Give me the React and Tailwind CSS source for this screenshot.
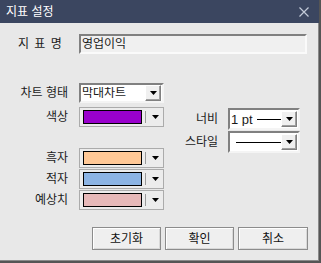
import React from "react";

const Arrow = () => (
  <svg width="7" height="4" viewBox="0 0 7 4" className="block">
    <path d="M0 0h7L3.5 4z" fill="#000" />
  </svg>
);

const Close = () => (
  <svg width="10" height="10" viewBox="0 0 10 10" className="block">
    <path d="M0.5 0.5L9.5 9.5M9.5 0.5L0.5 9.5" stroke="#c3cad8" strokeWidth="1.2" />
  </svg>
);

const ArrowBtn = () => (
  <div className="w-[16px] h-[16px] shrink-0 flex items-center justify-center bg-[#f0f0f0] border border-t-white border-l-white border-b-[#808080] border-r-[#808080] shadow-[inset_-1px_-1px_0_#a0a0a0]">
    <Arrow />
  </div>
);

const Combo = ({ w, h, children }) => (
  <div
    className={`${w} ${h} flex items-center bg-white border-2 border-t-[#808080] border-l-[#808080] border-b-[#f4f4f4] border-r-[#f4f4f4] pr-[1px]`}
  >
    <div className="flex-1 min-w-0 flex items-center pl-[1px] overflow-hidden whitespace-nowrap">{children}</div>
    <ArrowBtn />
  </div>
);

const ColorSelect = ({ color }) => (
  <div className="w-[85px] h-[20px] flex items-center border border-[#ababab] bg-[#ececec] pl-[3px]">
    <div className="w-[59px] h-[14px] border border-black" style={{ background: color }} />
    <div className="ml-[3px] w-px h-[12px] bg-[#9a9a9a]" />
    <div className="ml-[6px]">
      <Arrow />
    </div>
  </div>
);

const Btn = ({ children, w }) => (
  <div
    className={`${w} h-[23px] flex items-center justify-center bg-[#efefef] border border-[#8c8c8c] shadow-[inset_1px_1px_0_#ffffff,inset_-1px_-1px_0_#d8d8d8] text-[12px] text-[#111]`}
  >
    {children}
  </div>
);

export default function App() {
  return (
    <div
      className="w-[321px] h-[263px] flex flex-col bg-[#e8e8e8] border-r-2 border-b-2 border-r-[#555] border-b-[#555] shadow-[inset_-1px_-1px_0_#8a8a8a] overflow-hidden text-[#1a1a1a]"
      style={{ fontFamily: '"Liberation Sans","Noto Sans CJK KR",sans-serif' }}
    >
      <div className="h-[23px] shrink-0 bg-[#3b4660] flex items-center justify-between pl-[6px] pr-[10px]">
        <span className="text-[12px] text-white leading-none">지표 설정</span>
        <Close />
      </div>

      <div className="flex-1 flex flex-col pt-[11px] text-[12px] leading-none">
        <div className="flex items-center">
          <div className="w-[79px] pl-[18px] tracking-[1px]">지 표 명</div>
          <div className="w-[228px] h-[20px] flex items-center bg-[#f0f0f0] border-2 border-t-[#808080] border-l-[#808080] border-b-[#fafafa] border-r-[#fafafa] pl-[1px]">
            영업이익
          </div>
        </div>

        <div className="flex mt-[29px]">
          <div className="flex flex-col">
            <div className="flex items-center h-[20px]">
              <div className="w-[68px] text-right">차트 형태</div>
              <div className="ml-[11px]">
                <Combo w="w-[85px]" h="h-[20px]">
                  막대차트
                </Combo>
              </div>
            </div>
            <div className="flex items-center mt-[4px] h-[20px]">
              <div className="w-[68px] text-right">색상</div>
              <div className="ml-[11px]">
                <ColorSelect color="#9900cc" />
              </div>
            </div>
            <div className="flex flex-col gap-[1px] mt-[21px]">
              {[
                ["흑자", "#ffc896"],
                ["적자", "#8cb4e4"],
                ["예상치", "#e6b8b8"],
              ].map(([l, c]) => (
                <div key={l} className="flex items-center h-[20px]">
                  <div className="w-[68px] text-right">{l}</div>
                  <div className="ml-[11px]">
                    <ColorSelect color={c} />
                  </div>
                </div>
              ))}
            </div>
          </div>

          <div className="flex flex-col gap-[1px] mt-[25px] ml-[14px]">
            <div className="flex items-center">
              <div className="w-[40px] text-right">너비</div>
              <div className="ml-[10px]">
                <Combo w="w-[72px]" h="h-[22px]">
                  <span className="text-[13px] shrink-0">1 pt</span>
                  <span className="ml-[4px] w-[26px] h-px bg-black shrink-0" />
                </Combo>
              </div>
            </div>
            <div className="flex items-center">
              <div className="w-[40px] text-right">스타일</div>
              <div className="ml-[10px]">
                <Combo w="w-[72px]" h="h-[22px]">
                  <span className="ml-[5px] w-[48px] h-px bg-black shrink-0" />
                </Combo>
              </div>
            </div>
          </div>
        </div>

        <div className="flex justify-end gap-[4px] mt-[17px] pr-[11px]">
          <Btn w="w-[69px]">초기화</Btn>
          <Btn w="w-[69px]">확인</Btn>
          <Btn w="w-[70px]">취소</Btn>
        </div>
      </div>
    </div>
  );
}
